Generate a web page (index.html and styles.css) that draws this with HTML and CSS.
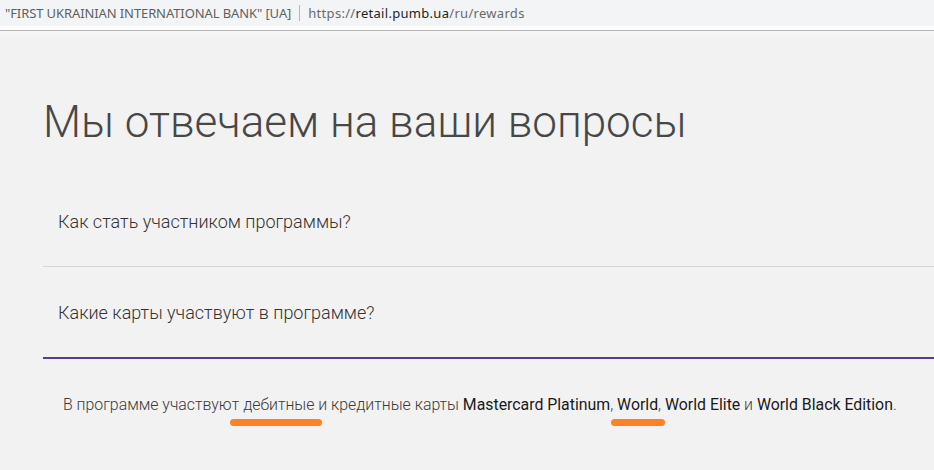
FILE: index.html
```html
<!DOCTYPE html>
<html lang="ru">
<head>
<meta charset="utf-8">
<title>PUMB rewards</title>
<link rel="stylesheet" href="styles.css">
</head>
<body>
<div class="addr">
  <span class="org">"FIRST UKRAINIAN INTERNATIONAL BANK" [UA]</span>
  <span class="sep"></span>
  <span class="url"><span class="dim">https://</span>retail.pumb.ua<span class="dim">/ru/rewards</span></span>
</div>
<div class="strip"></div>
<main class="page">
  <h1 class="title">Мы отвечаем на ваши вопросы</h1>
  <div class="faq">
    <div class="item">Как стать участником программы?</div>
    <div class="item open">Какие карты участвуют в программе?</div>
    <p class="answer">В программе участвуют <span class="mark m1">дебитные</span> и кредитные карты <b>Mastercard Platinum</b>, <b class="mark m2">World</b>, <b>World Elite</b> и <b>World Black Edition</b>.</p>
  </div>
</main>
</body>
</html>
```
FILE: styles.css
```css
html, body {
  margin: 0;
  padding: 0;
}
body {
  background: #f2f2f2;
  width: 934px;
  height: 470px;
  overflow: hidden;
  font-family: Roboto, "Liberation Sans", sans-serif;
}
.addr {
  height: 26px;
  background: #f3f4f6;
  display: flex;
  align-items: center;
  padding-left: 5px;
  font-family: "Noto Sans", "Open Sans", sans-serif;
  font-size: 13px;
  color: #5f5f5f;
  white-space: nowrap;
}
.org {
  letter-spacing: -0.1px;
}
.sep {
  width: 1px;
  height: 16px;
  background: #b8b8b8;
  margin: 0 8px 0 8px;
}
.url {
  color: #1f1f1f;
  letter-spacing: 0.3px;
}
.url .dim {
  color: #6a6a6a;
}
.strip {
  height: 4px;
  background: #ffffff;
  border-bottom: 1px solid #b4b4b4;
}
.page {
  padding: 0 0 0 43px;
  background: linear-gradient(#f7f7f7, #f2f2f2 8px);
}
.title {
  margin: 0;
  padding-top: 63px;
  font-size: 44px;
  line-height: 56px;
  font-weight: 300;
  color: #474747;
}
.faq {
  margin-top: 30px;
}
.item {
  padding: 32px 0 34px 15px;
  font-size: 18px;
  line-height: 20px;
  font-weight: 300;
  color: #333;
  border-bottom: 1px solid #d6d6d6;
}
.item.open {
  padding-top: 36px;
  border-bottom: 2px solid #5b3a96;
}
.answer {
  margin: 0;
  padding: 34px 0 0 20px;
  font-size: 15.85px;
  line-height: 24px;
  font-weight: 300;
  color: #3a3a3a;
  white-space: nowrap;
}
.answer b {
  font-weight: 400;
  color: #1a1a1a;
}
.mark {
  position: relative;
}
.mark::after {
  content: "";
  position: absolute;
  height: 7px;
  bottom: -12px;
  border-radius: 4px;
  background: #ff8126;
}
.m1::after {
  left: -13px;
  right: -8px;
}
.m2::after {
  left: -6px;
  right: -7px;
}
```
